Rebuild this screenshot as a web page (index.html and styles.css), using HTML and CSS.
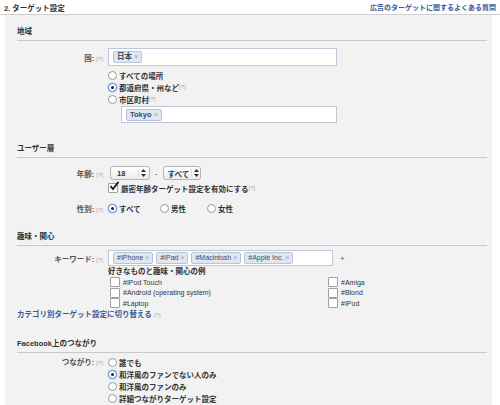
FILE: index.html
```html
<!DOCTYPE html>
<html lang="ja">
<head>
    <meta charset="UTF-8">
    <title>ターゲット設定</title>
    <link rel="stylesheet" href="styles.css">
</head>
<body>
    <div class="page-head">
        <span class="step-title">2. ターゲット設定</span>
        <a class="faq-link" href="#">広告のターゲットに関するよくある質問</a>
    </div>

    <div class="panel">
        <!-- 地域 -->
        <div class="section-title first">地域</div>
        <div class="row country-row">
            <div class="lbl">国: <span class="help">[?]</span></div>
            <div class="ctl">
                <div class="token-box">
                    <span class="token">日本 <span class="x">×</span></span>
                </div>
            </div>
        </div>
        <div class="row place-row">
            <div class="lbl"></div>
            <div class="ctl">
                <div class="opt"><span class="radio"></span>すべての場所</div>
                <div class="opt"><span class="radio on"></span>都道府県・州など <span class="help">[?]</span></div>
                <div class="opt"><span class="radio"></span>市区町村 <span class="help">[?]</span></div>
                <div class="token-box city-box">
                    <span class="token">Tokyo <span class="x">×</span></span>
                </div>
            </div>
        </div>

        <!-- ユーザー層 -->
        <div class="section-title">ユーザー層</div>
        <div class="row age-row">
            <div class="lbl">年齢: <span class="help">[?]</span></div>
            <div class="ctl inline">
                <span class="select age-min">18<span class="arrows"><svg width="5" height="8" viewBox="0 0 5 8"><path d="M2.5 0L5 3H0z M2.5 8L0 5h5z" fill="#333"/></svg></span></span>
                <span class="dash">-</span>
                <span class="select age-max">すべて<span class="arrows"><svg width="5" height="8" viewBox="0 0 5 8"><path d="M2.5 0L5 3H0z M2.5 8L0 5h5z" fill="#333"/></svg></span></span>
            </div>
        </div>
        <div class="row check-row">
            <div class="lbl"></div>
            <div class="ctl">
                <div class="opt"><span class="checkbox on"><svg width="10" height="10" viewBox="0 0 10 10"><path d="M1.5 5.2L4 8L9.5 0.8" fill="none" stroke="#1a1a1a" stroke-width="1.8"/></svg></span>厳密年齢ターゲット設定を有効にする <span class="help">[?]</span></div>
            </div>
        </div>
        <div class="row gender-row">
            <div class="lbl">性別: <span class="help">[?]</span></div>
            <div class="ctl inline">
                <span class="opt g-all"><span class="radio on"></span>すべて</span>
                <span class="opt g-male"><span class="radio"></span>男性</span>
                <span class="opt"><span class="radio"></span>女性</span>
            </div>
        </div>

        <!-- 趣味・関心 -->
        <div class="section-title interests">趣味・関心</div>
        <div class="row kw-row">
            <div class="lbl">キーワード: <span class="help">[?]</span></div>
            <div class="ctl inline">
                <div class="token-box kw-box">
                    <span class="token">#IPhone <span class="x">×</span></span>
                    <span class="token">#IPad <span class="x">×</span></span>
                    <span class="token">#Macintosh <span class="x">×</span></span>
                    <span class="token">#Apple Inc. <span class="x">×</span></span>
                </div>
                <span class="plus">+</span>
            </div>
        </div>
        <div class="row">
            <div class="lbl"></div>
            <div class="ctl">
                <div class="hint">好きなものと趣味・関心の例</div>
                <div class="suggest">
                    <div class="col">
                        <div class="sug"><span class="checkbox"></span>#IPod Touch</div>
                        <div class="sug"><span class="checkbox"></span>#Android (operating system)</div>
                        <div class="sug"><span class="checkbox"></span>#Laptop</div>
                    </div>
                    <div class="col">
                        <div class="sug"><span class="checkbox"></span>#Amiga</div>
                        <div class="sug"><span class="checkbox"></span>#Blond</div>
                        <div class="sug"><span class="checkbox"></span>#IPod</div>
                    </div>
                </div>
            </div>
        </div>
        <div class="switch"><a href="#">カテゴリ別ターゲット設定に切り替える</a> <span class="help">[?]</span></div>

        <!-- Facebook上のつながり -->
        <div class="section-title conn">Facebook上のつながり</div>
        <div class="row conn-row">
            <div class="lbl">つながり: <span class="help">[?]</span></div>
            <div class="ctl">
                <div class="opt"><span class="radio"></span>誰でも</div>
                <div class="opt"><span class="radio on"></span>和洋風のファンでない人のみ</div>
                <div class="opt"><span class="radio"></span>和洋風のファンのみ</div>
                <div class="opt"><span class="radio"></span>詳細つながりターゲット設定</div>
            </div>
        </div>
    </div>
</body>
</html>
```

FILE: styles.css
```css
body {
    margin: 0;
    font-family: "Liberation Sans", "Noto Sans CJK JP", sans-serif;
    font-size: 7.5px;
    color: #333;
    background: #fff;
    height: 405px;
    overflow: hidden;
}
a {
    color: #3b5998;
    text-decoration: none;
}
.page-head {
    display: flex;
    justify-content: space-between;
    align-items: center;
    height: 15px;
    padding: 0 4px;
    border-bottom: 1px solid #cfcfcf;
    box-sizing: border-box;
}
.step-title {
    font-weight: bold;
    font-size: 7.5px;
}
.faq-link {
    font-weight: bold;
    font-size: 7px;
}
.panel {
    background: #f2f2f2;
    margin: 0 8px 0 5px;
    padding: 11px 5px 20px 12px;
    height: 400px;
    box-sizing: border-box;
}
.section-title {
    font-weight: bold;
    line-height: 12px;
    padding-bottom: 2px;
    border-bottom: 1px solid #c9c9c9;
    margin-top: 20px;
}
.section-title.first {
    margin-top: 0;
}
.section-title.interests {
    margin-top: 17px;
}
.section-title.conn {
    margin-top: 18px;
}
.row {
    display: flex;
}
.lbl {
    flex: none;
    width: 86px;
    margin-right: 5px;
    text-align: right;
    font-weight: bold;
    color: #555;
    white-space: nowrap;
}
.ctl {
    flex: 1;
    min-width: 0;
}
.inline {
    display: flex;
    align-items: center;
}
.help {
    color: #aaa;
    font-weight: normal;
    font-size: 6px;
    vertical-align: top;
}
.lbl .help {
    vertical-align: baseline;
}

/* token inputs */
.token-box {
    background: #fff;
    border: 1px solid #bdc7d8;
    display: flex;
    align-items: center;
    gap: 3px;
    padding: 0 4px;
    box-sizing: border-box;
}
.token {
    background: #e2e6f0;
    border: 1px solid #b8c4dc;
    border-radius: 2px;
    padding: 0 3px;
    line-height: 10px;
    font-weight: bold;
    color: #3a4a6a;
    white-space: nowrap;
}
.token .x {
    color: #9aa6bd;
    font-weight: normal;
}
.country-row {
    margin-top: 7px;
    align-items: center;
}
.country-row .token-box {
    width: 229px;
    height: 18px;
}
.place-row {
    margin-top: 3px;
}
.city-box {
    width: 216px;
    height: 17px;
    margin-left: 13px;
    margin-top: 1px;
}

/* radios and checks */
.opt {
    display: flex;
    align-items: center;
    height: 12px;
    font-weight: bold;
    white-space: nowrap;
}
.radio {
    width: 9px;
    height: 9px;
    border-radius: 50%;
    border: 1px solid #9a9a9a;
    background: #fff;
    box-sizing: border-box;
    margin-right: 2px;
    display: inline-flex;
    align-items: center;
    justify-content: center;
    flex: none;
}
.radio.on {
    border-color: #5b8ed6;
    box-shadow: 0 0 2px #7aa8e8;
}
.radio.on::after {
    content: "";
    width: 3px;
    height: 3px;
    border-radius: 50%;
    background: #222;
}
.checkbox {
    width: 8px;
    height: 8px;
    border: 1px solid #a0a0a0;
    border-radius: 1px;
    background: #fff;
    margin-right: 3px;
    flex: none;
    position: relative;
}
.checkbox svg {
    position: absolute;
    left: 0;
    top: -3px;
}

/* age */
.age-row {
    margin-top: 8px;
    align-items: center;
}
.select {
    display: inline-flex;
    align-items: center;
    justify-content: space-between;
    height: 14px;
    box-sizing: border-box;
    border: 1px solid #b5b5b5;
    border-radius: 3px;
    background: linear-gradient(#fff, #ececec);
    padding: 0 3px 0 6px;
    font-weight: bold;
    white-space: nowrap;
}
.age-min {
    width: 40px;
    margin-left: 2px;
}
.age-max {
    width: 38px;
    padding-left: 4px;
}
.arrows {
    border-left: 1px solid #ddd;
    padding-left: 2px;
    margin-left: 2px;
    display: inline-flex;
}
.dash {
    margin: 0 5px;
}
.check-row {
    margin-top: 2px;
}
.gender-row {
    margin-top: 8px;
    align-items: center;
}
.g-all {
    width: 52px;
}
.g-male {
    width: 47px;
}

/* interests */
.kw-row {
    margin-top: 4px;
    align-items: center;
}
.kw-box {
    width: 225px;
    height: 16px;
}
.kw-box .token {
    font-weight: normal;
    font-size: 7px;
    color: #3a4a6a;
}
.plus {
    margin-left: 7px;
    color: #3b5998;
    font-size: 8px;
}
.hint {
    font-weight: bold;
    line-height: 11px;
}
.suggest {
    display: flex;
    padding-left: 2px;
}
.col {
    flex: none;
    width: 218px;
}
.col + .col {
    width: auto;
}
.sug {
    display: flex;
    align-items: center;
    height: 10.5px;
    font-size: 7px;
    color: #333;
}
.switch {
    margin-top: 1px;
    line-height: 10px;
}
.switch a {
    font-weight: bold;
}
.conn-row {
    margin-top: 4px;
}
.conn-row .lbl {
    line-height: 12px;
}
```
